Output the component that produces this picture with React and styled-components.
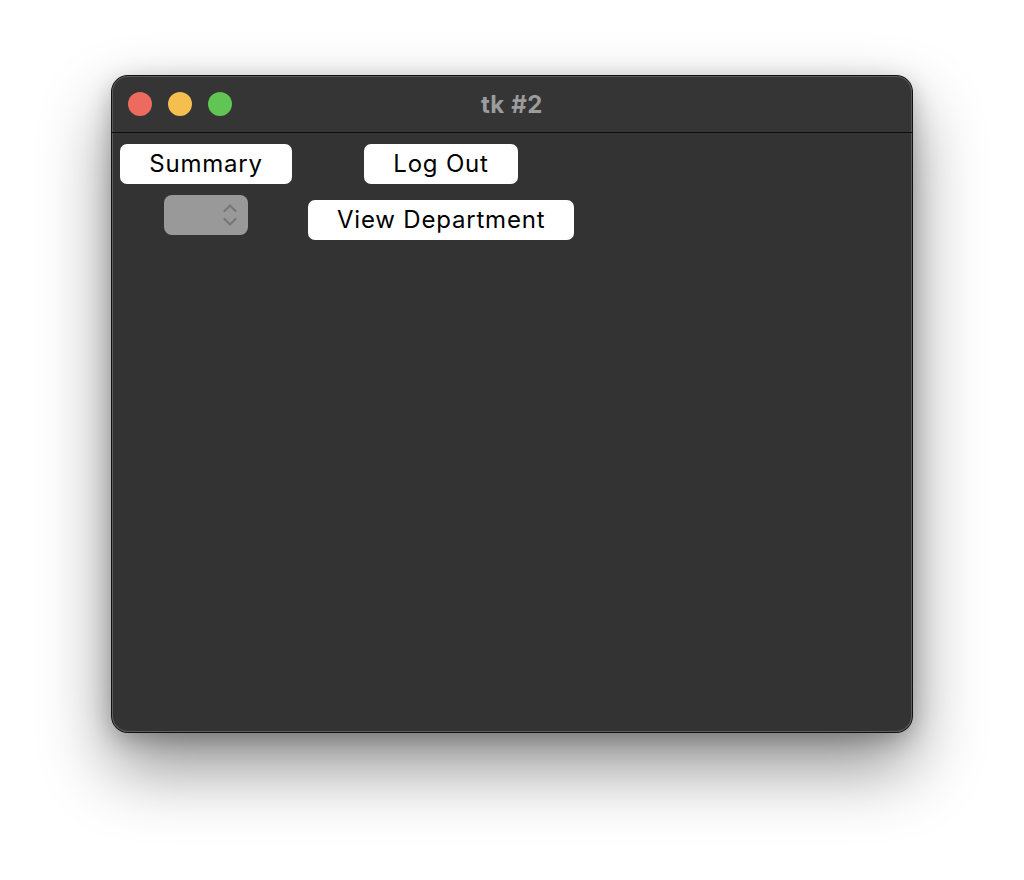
import React from 'react';
import styled, { createGlobalStyle } from 'styled-components';

const GlobalStyle = createGlobalStyle`
    html, body {
        margin: 0;
        padding: 0;
        background: #ffffff;
    }
    body {
        font-family: Inter, "Liberation Sans", sans-serif;
    }
`;

const Page = styled.div`
    width: 1024px;
    height: 880px;
    padding: 76px 112px;
    box-sizing: border-box;
`;

const Window = styled.div`
    width: 800px;
    height: 656px;
    border-radius: 16px;
    background: #333333;
    display: flex;
    flex-direction: column;
    overflow: hidden;
    box-shadow:
        0 0 0 1px #111,
        inset 0 0 0 1px #5e5e5e,
        0 34px 70px rgba(0, 0, 0, 0.45),
        0 6px 24px rgba(0, 0, 0, 0.25);
`;

const TitleBar = styled.div`
    height: 56px;
    flex: none;
    display: flex;
    align-items: center;
    padding: 0 16px;
    border-bottom: 1px solid #0d0d0d;
    background: #353535;
    border-radius: 16px 16px 0 0;
    box-shadow: inset 0 1px 0 #5a5a5a, inset 1px 0 0 #5a5a5a, inset -1px 0 0 #5a5a5a;
    position: relative;
`;

const Lights = styled.div`
    display: flex;
    gap: 16px;
`;

const Light = styled.span`
    width: 24px;
    height: 24px;
    border-radius: 50%;
    background: ${p => p.color};
`;

const Title = styled.div`
    position: absolute;
    left: 0;
    right: 0;
    top: 14px;
    text-align: center;
    font-size: 24px;
    font-weight: 700;
    letter-spacing: 0.6px;
    color: #9c9c9c;
    pointer-events: none;
`;

const Content = styled.div`
    flex: 1;
    padding: 11px 8px;
    display: grid;
    grid-template-columns: 172px 266px;
    column-gap: 16px;
    row-gap: 11px;
    align-content: start;
    align-items: start;
`;

const Button = styled.button`
    justify-self: ${p => p.$justify || 'stretch'};
    margin-top: ${p => p.$offset || 0}px;
    height: 40px;
    padding: 0 29px;
    border: none;
    border-radius: 7px;
    background: #ffffff;
    color: #000000;
    font-family: Inter, "Liberation Sans", sans-serif;
    font-size: 24px;
    font-weight: 400;
    letter-spacing: 0.8px;
    line-height: 40px;
    white-space: nowrap;
    cursor: default;
`;

const Select = styled.div`
    justify-self: center;
    width: 84px;
    height: 40px;
    border-radius: 8px;
    background: #999999;
    display: flex;
    align-items: center;
    justify-content: flex-end;
    padding-right: 10px;
    box-sizing: border-box;
`;

const Chevrons = () => (
    <svg width="16" height="26" viewBox="0 0 16 26">
        <path d="M2.5 9 L8 3.5 L13.5 9" fill="none" stroke="#777" strokeWidth="2.2" strokeLinecap="round" strokeLinejoin="round" />
        <path d="M2.5 17 L8 22.5 L13.5 17" fill="none" stroke="#777" strokeWidth="2.2" strokeLinecap="round" strokeLinejoin="round" />
    </svg>
);

export default function App() {
    return (
        <Page>
            <GlobalStyle />
            <Window>
                <TitleBar>
                    <Lights>
                        <Light color="#ed6a5e" />
                        <Light color="#f5bf4f" />
                        <Light color="#61c554" />
                    </Lights>
                    <Title>tk #2</Title>
                </TitleBar>
                <Content>
                    <Button>Summary</Button>
                    <Button $justify="center">Log Out</Button>
                    <Select>
                        <Chevrons />
                    </Select>
                    <Button $offset={5}>View Department</Button>
                </Content>
            </Window>
        </Page>
    );
}
